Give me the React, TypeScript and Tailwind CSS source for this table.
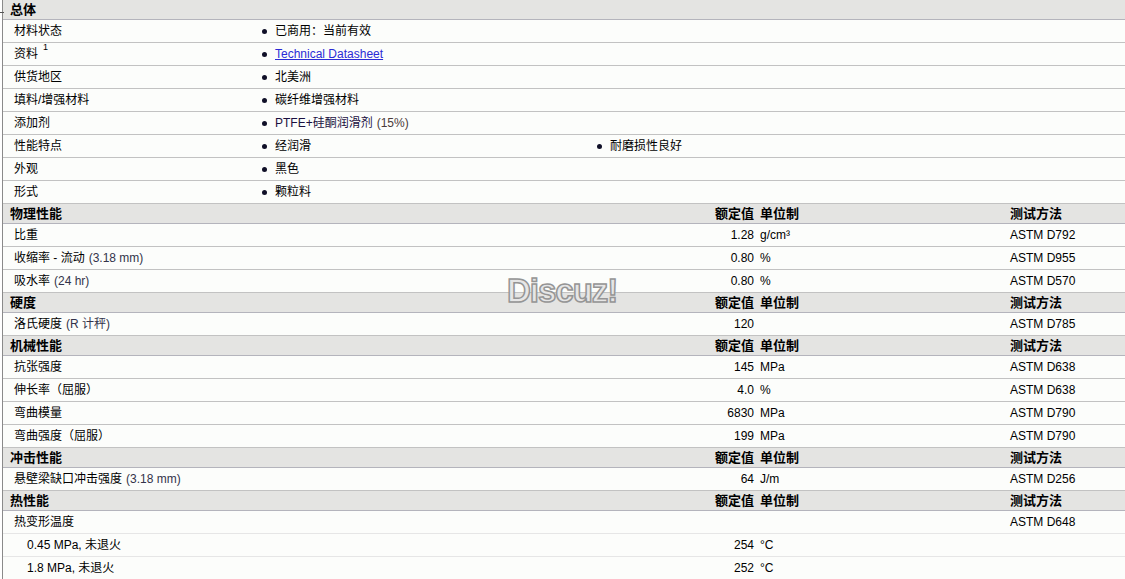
import React from "react";

const FONT = { fontFamily: '"Liberation Sans", Arial, "Noto Sans CJK SC", sans-serif' };

function Dot() {
  return <span className="inline-block w-[5px] h-[5px] rounded-full bg-[#101028] mr-[8px] shrink-0" />;
}

function Header({ title, cols = true }: { title: string; cols?: boolean }) {
  return (
    <div className="grid grid-cols-[690px_67px_250px_1fr] h-[20px] items-center bg-[#e4e4e2] border-b border-[#b4b4bc] text-[13px] font-bold text-black">
      <div className="pl-[7px]">{title}</div>
      {cols ? (
        <>
          <div className="text-right pr-[6px]">额定值</div>
          <div>单位制</div>
          <div>测试方法</div>
        </>
      ) : null}
    </div>
  );
}

function InfoRow({ label, sup, values }: { label: string; sup?: string; values: React.ReactNode[] }) {
  return (
    <div className="grid grid-cols-[252px_335px_1fr] h-[23px] items-center bg-[#fcfdfb] border-b border-[#c2c2c2] text-[12px] text-black">
      <div className="pl-[11px] flex items-start">
        <span>{label}</span>
        {sup ? <span className="text-[9px] leading-none ml-[5px] relative top-[-2px]">{sup}</span> : null}
      </div>
      {values.map((v, i) => (
        <div key={i} className="flex items-center pl-[7px]">
          <Dot />
          <span>{v}</span>
        </div>
      ))}
    </div>
  );
}

function PropRow({
  label,
  note,
  value,
  unit,
  method,
  indent,
  light,
}: {
  label: string;
  note?: string;
  value?: string;
  unit?: string;
  method?: string;
  indent?: boolean;
  light?: boolean;
}) {
  return (
    <div
      className={`grid grid-cols-[690px_67px_250px_1fr] h-[23px] items-center bg-[#fcfdfb] border-b text-[12px] text-black ${
        light ? "border-[#e6e6e6]" : "border-[#c2c2c2]"
      }`}
    >
      <div className={indent ? "pl-[24px]" : "pl-[11px]"}>
        {label}
        {note ? <span className="text-[#33334a] ml-[4px]">{note}</span> : null}
      </div>
      <div className="text-right pr-[6px]">{value}</div>
      <div>{unit}</div>
      <div>{method}</div>
    </div>
  );
}

export default function App() {
  return (
    <div className="w-[1125px] h-[579px] overflow-hidden bg-white pl-[2px] relative" style={FONT}>
      <div className="border-l border-[#8a8a8a] relative">
        <span className="absolute left-[-3px] top-[12px] w-[4px] h-[1px] bg-[#555]" />
        <Header title="总体" cols={false} />
        <InfoRow label="材料状态" values={["已商用：当前有效"]} />
        <InfoRow
          label="资料"
          sup="1"
          values={[<span className="text-[#2b2bd6] underline">Technical Datasheet</span>]}
        />
        <InfoRow label="供货地区" values={["北美洲"]} />
        <InfoRow label="填料/增强材料" values={["碳纤维增强材料"]} />
        <InfoRow
          label="添加剂"
          values={[
            <span>
              <span className="text-[#1a1040]">PTFE+硅酮润滑剂</span>
              <span className="text-[#4a3a3a] ml-[4px]">(15%)</span>
            </span>,
          ]}
        />
        <InfoRow label="性能特点" values={["经润滑", "耐磨损性良好"]} />
        <InfoRow label="外观" values={["黑色"]} />
        <InfoRow label="形式" values={["颗粒料"]} />

        <Header title="物理性能" />
        <PropRow label="比重" value="1.28" unit="g/cm³" method="ASTM D792" />
        <PropRow label="收缩率 - 流动" note="(3.18 mm)" value="0.80" unit="%" method="ASTM D955" />
        <PropRow label="吸水率" note="(24 hr)" value="0.80" unit="%" method="ASTM D570" />

        <Header title="硬度" />
        <PropRow label="洛氏硬度" note="(R 计秤)" value="120" method="ASTM D785" />

        <Header title="机械性能" />
        <PropRow label="抗张强度" value="145" unit="MPa" method="ASTM D638" />
        <PropRow label="伸长率（屈服）" value="4.0" unit="%" method="ASTM D638" />
        <PropRow label="弯曲模量" value="6830" unit="MPa" method="ASTM D790" />
        <PropRow label="弯曲强度（屈服）" value="199" unit="MPa" method="ASTM D790" />

        <Header title="冲击性能" />
        <PropRow label="悬壁梁缺口冲击强度" note="(3.18 mm)" value="64" unit="J/m" method="ASTM D256" />

        <Header title="热性能" />
        <PropRow label="热变形温度" method="ASTM D648" light />
        <PropRow label="0.45 MPa, 未退火" value="254" unit="°C" indent light />
        <PropRow label="1.8 MPa, 未退火" value="252" unit="°C" indent light />
      </div>

      <div
        className="absolute left-[507px] top-[274px] text-[33px] font-bold leading-none tracking-[-1px] text-[#e6e6e6] [-webkit-text-stroke:1.5px_#959595] pointer-events-none"
        style={{ fontFamily: '"Liberation Sans", Arial, sans-serif' }}
      >
        Discuz!
      </div>
    </div>
  );
}
